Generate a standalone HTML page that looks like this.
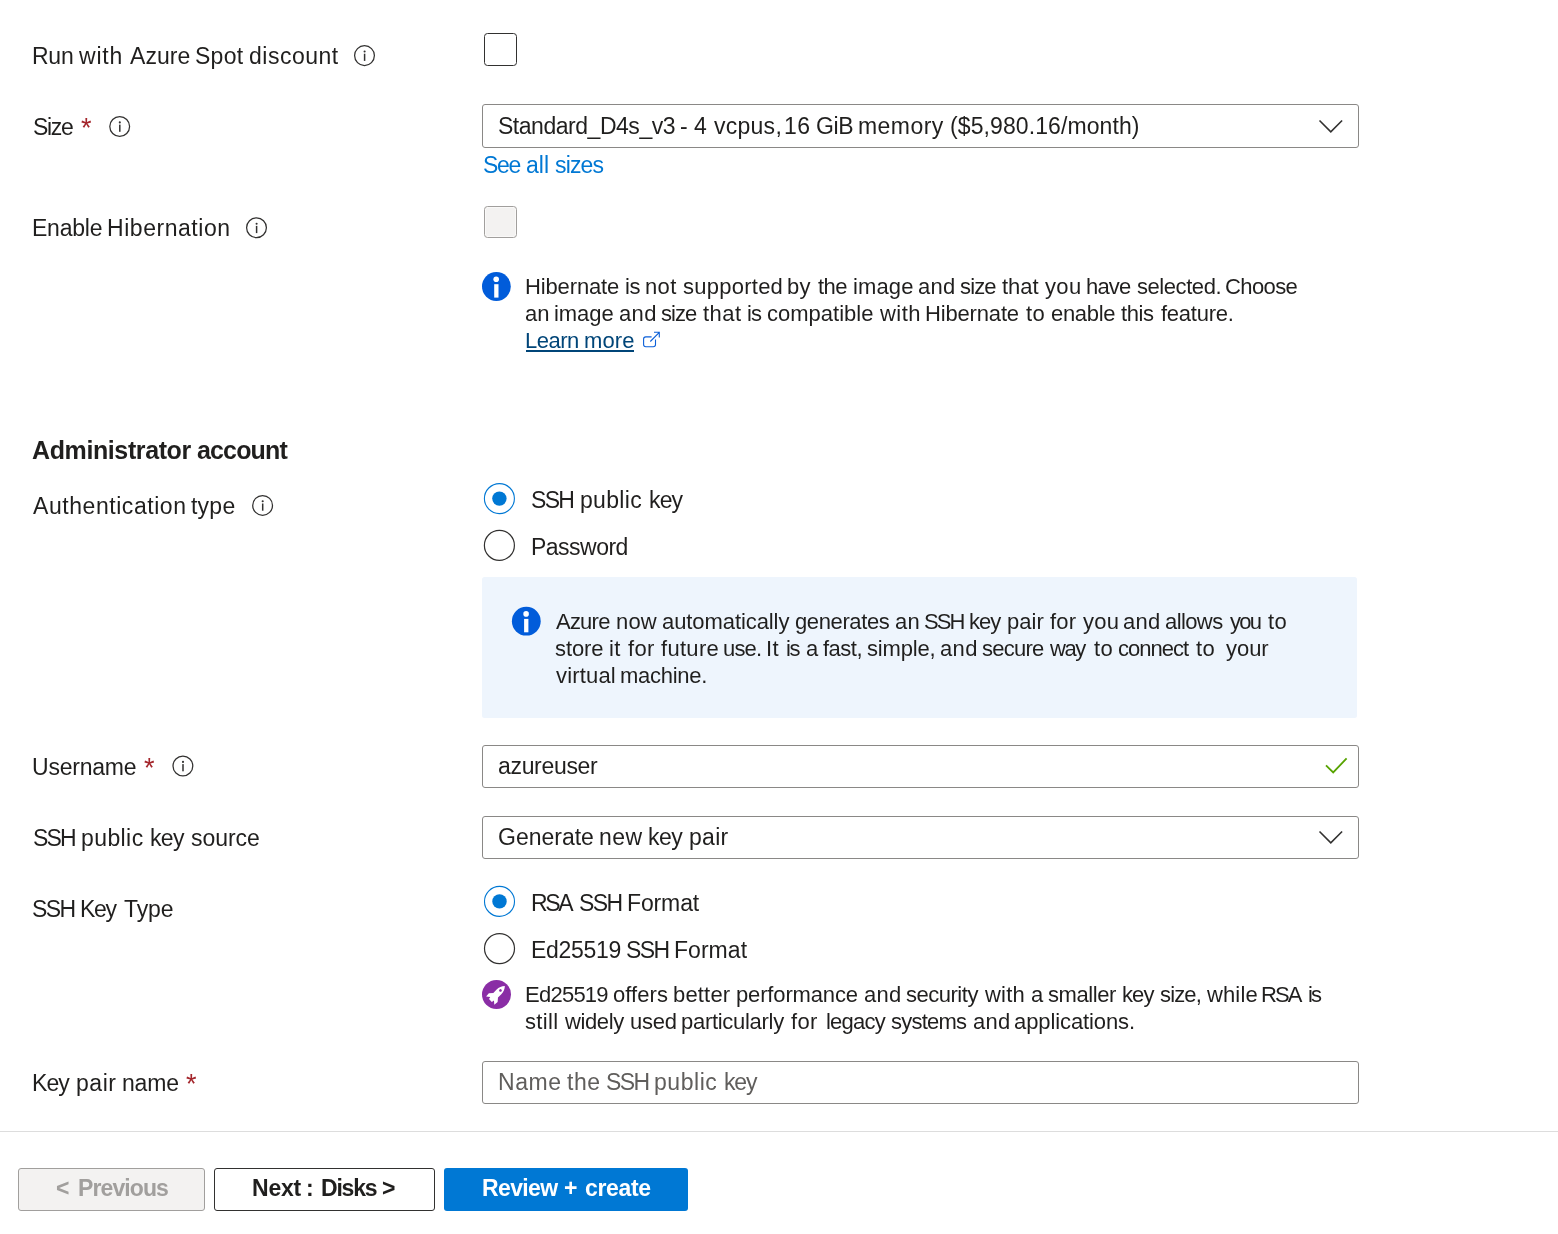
<!DOCTYPE html>
<html><head><meta charset="utf-8"><title>Azure VM</title><style>
html,body{margin:0;padding:0;background:#fff;width:1558px;height:1234px;overflow:hidden;position:relative}
.t{position:absolute;font-family:"Liberation Sans",sans-serif;line-height:30px;white-space:pre;will-change:transform}
.ab{position:absolute;display:block}
.box{position:absolute;box-sizing:border-box}
</style></head>
<body>
<div class='box' style='left:484px;top:33px;width:33px;height:33px;border:1.3px solid #323130;border-radius:3.5px;background:#fff'></div>
<div class='box' style='left:482px;top:104px;width:877px;height:44px;border:1.2px solid #8a8886;border-radius:3px;background:#fff'></div>
<div class='box' style='left:484px;top:206px;width:33px;height:32px;border:1px solid #a19f9d;border-radius:3.5px;background:#f3f2f1;box-shadow:inset 0 0 0 1px #faf9f8'></div>
<div class='box' style='left:482px;top:577px;width:875px;height:141px;border-radius:2.5px;background:#eef5fd'></div>
<div class='box' style='left:482px;top:745px;width:877px;height:43px;border:1.2px solid #8a8886;border-radius:3px;background:#fff'></div>
<div class='box' style='left:482px;top:816px;width:877px;height:43px;border:1.2px solid #8a8886;border-radius:3px;background:#fff'></div>
<div class='box' style='left:482px;top:1061px;width:877px;height:43px;border:1.2px solid #8a8886;border-radius:3px;background:#fff'></div>
<div class='box' style='left:0;top:1131px;width:1558px;height:1px;background:#dddddd'></div>
<div class='box' style='left:18px;top:1168px;width:187px;height:43px;border:1px solid #a19f9d;border-radius:3px;background:#f3f2f1'></div>
<div class='box' style='left:214px;top:1168px;width:221px;height:43px;border:1px solid #323130;border-radius:3px;background:#fff'></div>
<div class='box' style='left:444px;top:1168px;width:244px;height:43px;border-radius:3px;background:#0078d4'></div>
<div class='box' style='left:526px;top:350px;width:108px;height:2px;background:#004578'></div>
<svg class='ab' style='left:353px;top:44px' width='23' height='23' viewBox='0 0 23 23'><g transform='translate(11.50,11.60)'><circle cx='0' cy='0' r='9.9' fill='none' stroke='#323130' stroke-width='1.25'/><circle cx='0.1' cy='-4.1' r='1.05' fill='#323130'/><rect x='-0.65' y='-1.9' width='1.5' height='7.2' fill='#323130'/></g></svg>
<svg class='ab' style='left:108px;top:115px' width='23' height='23' viewBox='0 0 23 23'><g transform='translate(11.70,11.50)'><circle cx='0' cy='0' r='9.9' fill='none' stroke='#323130' stroke-width='1.25'/><circle cx='0.1' cy='-4.1' r='1.05' fill='#323130'/><rect x='-0.65' y='-1.9' width='1.5' height='7.2' fill='#323130'/></g></svg>
<svg class='ab' style='left:245px;top:216px' width='23' height='23' viewBox='0 0 23 23'><g transform='translate(11.50,11.80)'><circle cx='0' cy='0' r='9.9' fill='none' stroke='#323130' stroke-width='1.25'/><circle cx='0.1' cy='-4.1' r='1.05' fill='#323130'/><rect x='-0.65' y='-1.9' width='1.5' height='7.2' fill='#323130'/></g></svg>
<svg class='ab' style='left:251px;top:493px' width='23' height='23' viewBox='0 0 23 23'><g transform='translate(11.60,12.40)'><circle cx='0' cy='0' r='9.9' fill='none' stroke='#323130' stroke-width='1.25'/><circle cx='0.1' cy='-4.1' r='1.05' fill='#323130'/><rect x='-0.65' y='-1.9' width='1.5' height='7.2' fill='#323130'/></g></svg>
<svg class='ab' style='left:171px;top:754px' width='23' height='23' viewBox='0 0 23 23'><g transform='translate(11.90,12.00)'><circle cx='0' cy='0' r='9.9' fill='none' stroke='#323130' stroke-width='1.25'/><circle cx='0.1' cy='-4.1' r='1.05' fill='#323130'/><rect x='-0.65' y='-1.9' width='1.5' height='7.2' fill='#323130'/></g></svg>
<svg class='ab' style='left:1318px;top:119px' width='27' height='16' viewBox='0 0 27 16'><polyline points='1.5,1.5 12.8,12.8 24.1,1.5' fill='none' stroke='#323130' stroke-width='1.6'/></svg>
<svg class='ab' style='left:1318px;top:830px' width='27' height='16' viewBox='0 0 27 16'><polyline points='1.5,1.5 12.8,12.8 24.1,1.5' fill='none' stroke='#323130' stroke-width='1.6'/></svg>
<svg class='ab' style='left:481px;top:271px' width='31' height='31' viewBox='0 0 31 31'><g transform='translate(15.40,15.50)'><circle cx='0' cy='0' r='14.4' fill='#015cda'/><circle cx='-0.2' cy='-7.3' r='2.8' fill='#fff'/><rect x='-2.2' y='-2.3' width='4.3' height='13.4' fill='#fff'/></g></svg>
<svg class='ab' style='left:642px;top:331px' width='20' height='20' viewBox='0 0 20 20'><path d='M9.6,5.9 H3.8 Q1.6,5.9 1.6,8.1 V13.6 Q1.6,15.8 3.8,15.8 H11.3 Q13.5,15.8 13.5,13.6 V8.6' fill='none' stroke='#0b5fd8' stroke-width='1.1'/><path d='M8.3,10.5 L17.3,1.3 M12,1.3 H17.3 V6.6' fill='none' stroke='#0b5fd8' stroke-width='1.1'/></svg>
<svg class='ab' style='left:482px;top:481px' width='35' height='35' viewBox='0 0 35 35'><g transform='translate(17.40,17.60)'><circle cx='0' cy='0' r='15' fill='#fff' stroke='#0078d4' stroke-width='1.1'/><circle cx='0' cy='0' r='7.2' fill='#0078d4'/></g></svg>
<svg class='ab' style='left:482px;top:528px' width='35' height='35' viewBox='0 0 35 35'><g transform='translate(17.40,17.40)'><circle cx='0' cy='0' r='15' fill='#fff' stroke='#323130' stroke-width='1.2'/></g></svg>
<svg class='ab' style='left:511px;top:606px' width='31' height='31' viewBox='0 0 31 31'><g transform='translate(15.30,15.20)'><circle cx='0' cy='0' r='14.4' fill='#015cda'/><circle cx='-0.2' cy='-7.3' r='2.8' fill='#fff'/><rect x='-2.2' y='-2.3' width='4.3' height='13.4' fill='#fff'/></g></svg>
<svg class='ab' style='left:1325px;top:757px' width='26' height='20' viewBox='0 0 26 20'><polyline points='1,8.3 8.2,15.4 21.6,1.4' fill='none' stroke='#57a300' stroke-width='1.8'/></svg>
<svg class='ab' style='left:482px;top:884px' width='35' height='35' viewBox='0 0 35 35'><g transform='translate(17.50,17.40)'><circle cx='0' cy='0' r='15' fill='#fff' stroke='#0078d4' stroke-width='1.1'/><circle cx='0' cy='0' r='7.2' fill='#0078d4'/></g></svg>
<svg class='ab' style='left:482px;top:931px' width='35' height='35' viewBox='0 0 35 35'><g transform='translate(17.50,17.60)'><circle cx='0' cy='0' r='15' fill='#fff' stroke='#323130' stroke-width='1.2'/></g></svg>
<svg class='ab' style='left:481px;top:979px' width='31' height='31' viewBox='0 0 31 31'><circle cx='15.50' cy='15.40' r='14.5' fill='#8a2da5'/><g transform='translate(15.50,15.40) rotate(45)'><path d='M0,-11.8 C2.2,-9.6 3.3,-6.5 3.3,-3.5 L3.3,1.2 L6.2,4.6 L5.8,8.9 L2.6,6.2 L2.0,8.6 L-2.0,8.6 L-2.6,6.2 L-5.8,8.9 L-6.2,4.6 L-3.3,1.2 L-3.3,-3.5 C-3.3,-6.5 -2.2,-9.6 0,-11.8 Z' fill='#fff'/><circle cx='0' cy='-5.6' r='1.35' fill='#8a2da5'/></g></svg>
<div class='t' style='left:31.8px;top:40.6px;font-size:23px;font-weight:400;color:#201f1e;letter-spacing:-0.250px'>Run</div>
<div class='t' style='left:79.3px;top:40.6px;font-size:23px;font-weight:400;color:#201f1e;letter-spacing:0.789px'>with</div>
<div class='t' style='left:129.7px;top:40.6px;font-size:23px;font-weight:400;color:#201f1e;letter-spacing:0.075px'>Azure</div>
<div class='t' style='left:195.0px;top:40.6px;font-size:23px;font-weight:400;color:#201f1e;letter-spacing:0.267px'>Spot</div>
<div class='t' style='left:248.8px;top:40.6px;font-size:23px;font-weight:400;color:#201f1e;letter-spacing:0.514px'>discount</div>
<div class='t' style='left:32.5px;top:112.0px;font-size:23px;font-weight:400;color:#201f1e;letter-spacing:-1.333px'>Size</div>
<div class='t' style='left:32.2px;top:213.0px;font-size:23px;font-weight:400;color:#201f1e;letter-spacing:-0.220px'>Enable</div>
<div class='t' style='left:107.1px;top:213.0px;font-size:23px;font-weight:400;color:#201f1e;letter-spacing:0.540px'>Hibernation</div>
<div class='t' style='left:31.6px;top:434.8px;font-size:25px;font-weight:700;color:#201f1e;letter-spacing:-0.392px'>Administrator</div>
<div class='t' style='left:196.9px;top:434.8px;font-size:25px;font-weight:700;color:#201f1e;letter-spacing:-0.850px'>account</div>
<div class='t' style='left:33.1px;top:490.5px;font-size:23px;font-weight:400;color:#201f1e;letter-spacing:0.554px'>Authentication</div>
<div class='t' style='left:191.3px;top:490.5px;font-size:23px;font-weight:400;color:#201f1e;letter-spacing:0.233px'>type</div>
<div class='t' style='left:31.5px;top:752.0px;font-size:23px;font-weight:400;color:#201f1e;letter-spacing:-0.214px'>Username</div>
<div class='t' style='left:32.9px;top:823.0px;font-size:23px;font-weight:400;color:#201f1e;letter-spacing:-1.790px'>SSH</div>
<div class='t' style='left:80.9px;top:823.0px;font-size:23px;font-weight:400;color:#201f1e;letter-spacing:0.410px'>public</div>
<div class='t' style='left:150.3px;top:823.0px;font-size:23px;font-weight:400;color:#201f1e;letter-spacing:-0.650px'>key</div>
<div class='t' style='left:191.0px;top:823.0px;font-size:23px;font-weight:400;color:#201f1e;letter-spacing:-0.060px'>source</div>
<div class='t' style='left:32.1px;top:894.0px;font-size:23px;font-weight:400;color:#201f1e;letter-spacing:-1.650px'>SSH</div>
<div class='t' style='left:79.8px;top:894.0px;font-size:23px;font-weight:400;color:#201f1e;letter-spacing:-1.350px'>Key</div>
<div class='t' style='left:124.1px;top:894.0px;font-size:23px;font-weight:400;color:#201f1e;letter-spacing:-0.100px'>Type</div>
<div class='t' style='left:32.2px;top:1068.0px;font-size:23px;font-weight:400;color:#201f1e;letter-spacing:-0.950px'>Key</div>
<div class='t' style='left:76.3px;top:1068.0px;font-size:23px;font-weight:400;color:#201f1e;letter-spacing:0.558px'>pair</div>
<div class='t' style='left:122.1px;top:1068.0px;font-size:23px;font-weight:400;color:#201f1e;letter-spacing:-0.200px'>name</div>
<div class='t' style='left:497.7px;top:111.0px;font-size:23px;font-weight:400;color:#201f1e;letter-spacing:-0.471px'>Standard_D4s_v3</div>
<div class='t' style='left:680.1px;top:111.0px;font-size:23px;font-weight:400;color:#201f1e;letter-spacing:-0.144px'>-</div>
<div class='t' style='left:694.4px;top:111.0px;font-size:23px;font-weight:400;color:#201f1e;letter-spacing:-0.144px'>4</div>
<div class='t' style='left:713.9px;top:111.0px;font-size:23px;font-weight:400;color:#201f1e;letter-spacing:0.260px'>vcpus,</div>
<div class='t' style='left:784.2px;top:111.0px;font-size:23px;font-weight:400;color:#201f1e;letter-spacing:0.456px'>16</div>
<div class='t' style='left:816.0px;top:111.0px;font-size:23px;font-weight:400;color:#201f1e;letter-spacing:-0.350px'>GiB</div>
<div class='t' style='left:858.3px;top:111.0px;font-size:23px;font-weight:400;color:#201f1e;letter-spacing:0.456px'>memory</div>
<div class='t' style='left:950.0px;top:111.0px;font-size:23px;font-weight:400;color:#201f1e;letter-spacing:0.094px'>($5,980.16/month)</div>
<div class='t' style='left:482.5px;top:149.8px;font-size:23px;font-weight:400;color:#0078d4;letter-spacing:-1.350px'>See</div>
<div class='t' style='left:525.8px;top:149.8px;font-size:23px;font-weight:400;color:#0078d4;letter-spacing:-0.000px'>all</div>
<div class='t' style='left:554.7px;top:149.8px;font-size:23px;font-weight:400;color:#0078d4;letter-spacing:-0.850px'>sizes</div>
<div class='t' style='left:524.9px;top:272.0px;font-size:22px;font-weight:400;color:#201f1e;letter-spacing:-0.138px'>Hibernate</div>
<div class='t' style='left:624.8px;top:272.0px;font-size:22px;font-weight:400;color:#201f1e;letter-spacing:-0.500px'>is</div>
<div class='t' style='left:645.3px;top:272.0px;font-size:22px;font-weight:400;color:#201f1e;letter-spacing:0.345px'>not</div>
<div class='t' style='left:683.3px;top:272.0px;font-size:22px;font-weight:400;color:#201f1e;letter-spacing:0.250px'>supported</div>
<div class='t' style='left:787.3px;top:272.0px;font-size:22px;font-weight:400;color:#201f1e;letter-spacing:0.345px'>by</div>
<div class='t' style='left:817.8px;top:272.0px;font-size:22px;font-weight:400;color:#201f1e;letter-spacing:-0.500px'>the</div>
<div class='t' style='left:852.8px;top:272.0px;font-size:22px;font-weight:400;color:#201f1e;letter-spacing:0.125px'>image</div>
<div class='t' style='left:918.3px;top:272.0px;font-size:22px;font-weight:400;color:#201f1e;letter-spacing:0.250px'>and</div>
<div class='t' style='left:959.8px;top:272.0px;font-size:22px;font-weight:400;color:#201f1e;letter-spacing:-0.867px'>size</div>
<div class='t' style='left:1002.2px;top:272.0px;font-size:22px;font-weight:400;color:#201f1e;letter-spacing:-0.067px'>that</div>
<div class='t' style='left:1045.0px;top:272.0px;font-size:22px;font-weight:400;color:#201f1e;letter-spacing:0.345px'>you</div>
<div class='t' style='left:1085.9px;top:272.0px;font-size:22px;font-weight:400;color:#201f1e;letter-spacing:-0.800px'>have</div>
<div class='t' style='left:1136.5px;top:272.0px;font-size:22px;font-weight:400;color:#201f1e;letter-spacing:-0.437px'>selected.</div>
<div class='t' style='left:1225.0px;top:272.0px;font-size:22px;font-weight:400;color:#201f1e;letter-spacing:-0.600px'>Choose</div>
<div class='t' style='left:525.2px;top:299.0px;font-size:22px;font-weight:400;color:#201f1e;letter-spacing:0.100px'>an</div>
<div class='t' style='left:554.3px;top:299.0px;font-size:22px;font-weight:400;color:#201f1e;letter-spacing:-0.075px'>image</div>
<div class='t' style='left:619.0px;top:299.0px;font-size:22px;font-weight:400;color:#201f1e;letter-spacing:0.350px'>and</div>
<div class='t' style='left:660.7px;top:299.0px;font-size:22px;font-weight:400;color:#201f1e;letter-spacing:-0.967px'>size</div>
<div class='t' style='left:702.8px;top:299.0px;font-size:22px;font-weight:400;color:#201f1e;letter-spacing:0.447px'>that</div>
<div class='t' style='left:746.6px;top:299.0px;font-size:22px;font-weight:400;color:#201f1e;letter-spacing:-1.000px'>is</div>
<div class='t' style='left:766.6px;top:299.0px;font-size:22px;font-weight:400;color:#201f1e;letter-spacing:0.011px'>compatible</div>
<div class='t' style='left:879.7px;top:299.0px;font-size:22px;font-weight:400;color:#201f1e;letter-spacing:0.447px'>with</div>
<div class='t' style='left:925.0px;top:299.0px;font-size:22px;font-weight:400;color:#201f1e;letter-spacing:-0.162px'>Hibernate</div>
<div class='t' style='left:1025.7px;top:299.0px;font-size:22px;font-weight:400;color:#201f1e;letter-spacing:0.447px'>to</div>
<div class='t' style='left:1050.5px;top:299.0px;font-size:22px;font-weight:400;color:#201f1e;letter-spacing:-0.320px'>enable</div>
<div class='t' style='left:1120.9px;top:299.0px;font-size:22px;font-weight:400;color:#201f1e;letter-spacing:-0.400px'>this</div>
<div class='t' style='left:1160.7px;top:299.0px;font-size:22px;font-weight:400;color:#201f1e;letter-spacing:-0.243px'>feature.</div>
<div class='t' style='left:524.9px;top:326.0px;font-size:22px;font-weight:400;color:#004578;letter-spacing:-0.500px'>Learn</div>
<div class='t' style='left:583.9px;top:326.0px;font-size:22px;font-weight:400;color:#004578;letter-spacing:0.100px'>more</div>
<div class='t' style='left:530.9px;top:484.9px;font-size:23px;font-weight:400;color:#201f1e;letter-spacing:-1.700px'>SSH</div>
<div class='t' style='left:579.5px;top:484.9px;font-size:23px;font-weight:400;color:#201f1e;letter-spacing:0.315px'>public</div>
<div class='t' style='left:648.8px;top:484.9px;font-size:23px;font-weight:400;color:#201f1e;letter-spacing:-0.850px'>key</div>
<div class='t' style='left:530.6px;top:532.2px;font-size:23px;font-weight:400;color:#201f1e;letter-spacing:-0.514px'>Password</div>
<div class='t' style='left:555.8px;top:607.2px;font-size:22px;font-weight:400;color:#201f1e;letter-spacing:-0.775px'>Azure</div>
<div class='t' style='left:615.7px;top:607.2px;font-size:22px;font-weight:400;color:#201f1e;letter-spacing:0.150px'>now</div>
<div class='t' style='left:662.0px;top:607.2px;font-size:22px;font-weight:400;color:#201f1e;letter-spacing:-0.083px'>automatically</div>
<div class='t' style='left:795.0px;top:607.2px;font-size:22px;font-weight:400;color:#201f1e;letter-spacing:-0.388px'>generates</div>
<div class='t' style='left:894.9px;top:607.2px;font-size:22px;font-weight:400;color:#201f1e;letter-spacing:0.301px'>an</div>
<div class='t' style='left:924.3px;top:607.2px;font-size:22px;font-weight:400;color:#201f1e;letter-spacing:-1.899px'>SSH</div>
<div class='t' style='left:968.9px;top:607.2px;font-size:22px;font-weight:400;color:#201f1e;letter-spacing:-0.950px'>key</div>
<div class='t' style='left:1007.0px;top:607.2px;font-size:22px;font-weight:400;color:#201f1e;letter-spacing:0.067px'>pair</div>
<div class='t' style='left:1050.2px;top:607.2px;font-size:22px;font-weight:400;color:#201f1e;letter-spacing:0.150px'>for</div>
<div class='t' style='left:1082.5px;top:607.2px;font-size:22px;font-weight:400;color:#201f1e;letter-spacing:0.300px'>you</div>
<div class='t' style='left:1123.1px;top:607.2px;font-size:22px;font-weight:400;color:#201f1e;letter-spacing:0.301px'>and</div>
<div class='t' style='left:1165.0px;top:607.2px;font-size:22px;font-weight:400;color:#201f1e;letter-spacing:-0.600px'>allows</div>
<div class='t' style='left:1230.0px;top:607.2px;font-size:22px;font-weight:400;color:#201f1e;letter-spacing:-1.700px'>you</div>
<div class='t' style='left:1267.6px;top:607.2px;font-size:22px;font-weight:400;color:#201f1e;letter-spacing:0.301px'>to</div>
<div class='t' style='left:554.9px;top:634.1px;font-size:22px;font-weight:400;color:#201f1e;letter-spacing:-0.075px'>store</div>
<div class='t' style='left:608.6px;top:634.1px;font-size:22px;font-weight:400;color:#201f1e;letter-spacing:0.376px'>it</div>
<div class='t' style='left:628.1px;top:634.1px;font-size:22px;font-weight:400;color:#201f1e;letter-spacing:0.376px'>for</div>
<div class='t' style='left:660.9px;top:634.1px;font-size:22px;font-weight:400;color:#201f1e;letter-spacing:0.300px'>future</div>
<div class='t' style='left:723.4px;top:634.1px;font-size:22px;font-weight:400;color:#201f1e;letter-spacing:-0.833px'>use.</div>
<div class='t' style='left:765.9px;top:634.1px;font-size:22px;font-weight:400;color:#201f1e;letter-spacing:0.376px'>It</div>
<div class='t' style='left:786.3px;top:634.1px;font-size:22px;font-weight:400;color:#201f1e;letter-spacing:-1.500px'>is</div>
<div class='t' style='left:805.8px;top:634.1px;font-size:22px;font-weight:400;color:#201f1e;letter-spacing:-0.224px'>a</div>
<div class='t' style='left:823.4px;top:634.1px;font-size:22px;font-weight:400;color:#201f1e;letter-spacing:-0.500px'>fast,</div>
<div class='t' style='left:867.4px;top:634.1px;font-size:22px;font-weight:400;color:#201f1e;letter-spacing:-0.183px'>simple,</div>
<div class='t' style='left:940.3px;top:634.1px;font-size:22px;font-weight:400;color:#201f1e;letter-spacing:0.376px'>and</div>
<div class='t' style='left:982.2px;top:634.1px;font-size:22px;font-weight:400;color:#201f1e;letter-spacing:-0.760px'>secure</div>
<div class='t' style='left:1050.4px;top:634.1px;font-size:22px;font-weight:400;color:#201f1e;letter-spacing:-1.450px'>way</div>
<div class='t' style='left:1093.5px;top:634.1px;font-size:22px;font-weight:400;color:#201f1e;letter-spacing:0.376px'>to</div>
<div class='t' style='left:1118.2px;top:634.1px;font-size:22px;font-weight:400;color:#201f1e;letter-spacing:-1.000px'>connect</div>
<div class='t' style='left:1196.2px;top:634.1px;font-size:22px;font-weight:400;color:#201f1e;letter-spacing:0.376px'>to</div>
<div class='t' style='left:1225.6px;top:634.1px;font-size:22px;font-weight:400;color:#201f1e;letter-spacing:-0.033px'>your</div>
<div class='t' style='left:555.6px;top:661.0px;font-size:22px;font-weight:400;color:#201f1e;letter-spacing:0.167px'>virtual</div>
<div class='t' style='left:619.6px;top:661.0px;font-size:22px;font-weight:400;color:#201f1e;letter-spacing:-0.286px'>machine.</div>
<div class='t' style='left:497.5px;top:751.3px;font-size:23px;font-weight:400;color:#201f1e;letter-spacing:-0.325px'>azureuser</div>
<div class='t' style='left:497.8px;top:822.0px;font-size:23px;font-weight:400;color:#201f1e;letter-spacing:-0.000px'>Generate</div>
<div class='t' style='left:598.8px;top:822.0px;font-size:23px;font-weight:400;color:#201f1e;letter-spacing:0.450px'>new</div>
<div class='t' style='left:647.7px;top:822.0px;font-size:23px;font-weight:400;color:#201f1e;letter-spacing:-0.500px'>key</div>
<div class='t' style='left:688.7px;top:822.0px;font-size:23px;font-weight:400;color:#201f1e;letter-spacing:0.300px'>pair</div>
<div class='t' style='left:530.7px;top:888.0px;font-size:23px;font-weight:400;color:#201f1e;letter-spacing:-2.331px'>RSA</div>
<div class='t' style='left:578.7px;top:888.0px;font-size:23px;font-weight:400;color:#201f1e;letter-spacing:-1.600px'>SSH</div>
<div class='t' style='left:626.5px;top:888.0px;font-size:23px;font-weight:400;color:#201f1e;letter-spacing:-0.131px'>Format</div>
<div class='t' style='left:530.7px;top:934.8px;font-size:23px;font-weight:400;color:#201f1e;letter-spacing:-0.283px'>Ed25519</div>
<div class='t' style='left:626.0px;top:934.8px;font-size:23px;font-weight:400;color:#201f1e;letter-spacing:-1.650px'>SSH</div>
<div class='t' style='left:673.7px;top:934.8px;font-size:23px;font-weight:400;color:#201f1e;letter-spacing:0.040px'>Format</div>
<div class='t' style='left:524.6px;top:979.5px;font-size:22px;font-weight:400;color:#201f1e;letter-spacing:-0.750px'>Ed25519</div>
<div class='t' style='left:613.1px;top:979.5px;font-size:22px;font-weight:400;color:#201f1e;letter-spacing:0.060px'>offers</div>
<div class='t' style='left:673.4px;top:979.5px;font-size:22px;font-weight:400;color:#201f1e;letter-spacing:0.180px'>better</div>
<div class='t' style='left:736.3px;top:979.5px;font-size:22px;font-weight:400;color:#201f1e;letter-spacing:-0.150px'>performance</div>
<div class='t' style='left:863.8px;top:979.5px;font-size:22px;font-weight:400;color:#201f1e;letter-spacing:0.233px'>and</div>
<div class='t' style='left:905.7px;top:979.5px;font-size:22px;font-weight:400;color:#201f1e;letter-spacing:-0.486px'>security</div>
<div class='t' style='left:985.3px;top:979.5px;font-size:22px;font-weight:400;color:#201f1e;letter-spacing:0.233px'>with</div>
<div class='t' style='left:1030.7px;top:979.5px;font-size:22px;font-weight:400;color:#201f1e;letter-spacing:-0.367px'>a</div>
<div class='t' style='left:1047.6px;top:979.5px;font-size:22px;font-weight:400;color:#201f1e;letter-spacing:-0.417px'>smaller</div>
<div class='t' style='left:1122.1px;top:979.5px;font-size:22px;font-weight:400;color:#201f1e;letter-spacing:-0.900px'>key</div>
<div class='t' style='left:1160.3px;top:979.5px;font-size:22px;font-weight:400;color:#201f1e;letter-spacing:-0.850px'>size,</div>
<div class='t' style='left:1206.9px;top:979.5px;font-size:22px;font-weight:400;color:#201f1e;letter-spacing:0.125px'>while</div>
<div class='t' style='left:1261.4px;top:979.5px;font-size:22px;font-weight:400;color:#201f1e;letter-spacing:-1.967px'>RSA</div>
<div class='t' style='left:1307.6px;top:979.5px;font-size:22px;font-weight:400;color:#201f1e;letter-spacing:-1.967px'>is</div>
<div class='t' style='left:525.2px;top:1007.0px;font-size:22px;font-weight:400;color:#201f1e;letter-spacing:0.367px'>still</div>
<div class='t' style='left:564.8px;top:1007.0px;font-size:22px;font-weight:400;color:#201f1e;letter-spacing:-0.380px'>widely</div>
<div class='t' style='left:629.9px;top:1007.0px;font-size:22px;font-weight:400;color:#201f1e;letter-spacing:-0.200px'>used</div>
<div class='t' style='left:681.3px;top:1007.0px;font-size:22px;font-weight:400;color:#201f1e;letter-spacing:-0.291px'>particularly</div>
<div class='t' style='left:791.1px;top:1007.0px;font-size:22px;font-weight:400;color:#201f1e;letter-spacing:0.367px'>for</div>
<div class='t' style='left:826.2px;top:1007.0px;font-size:22px;font-weight:400;color:#201f1e;letter-spacing:-0.780px'>legacy</div>
<div class='t' style='left:891.3px;top:1007.0px;font-size:22px;font-weight:400;color:#201f1e;letter-spacing:-0.783px'>systems</div>
<div class='t' style='left:972.6px;top:1007.0px;font-size:22px;font-weight:400;color:#201f1e;letter-spacing:0.250px'>and</div>
<div class='t' style='left:1014.1px;top:1007.0px;font-size:22px;font-weight:400;color:#201f1e;letter-spacing:-0.100px'>applications.</div>
<div class='t' style='left:497.5px;top:1067.2px;font-size:23px;font-weight:400;color:#605e5c;letter-spacing:0.555px'>Name</div>
<div class='t' style='left:566.6px;top:1067.2px;font-size:23px;font-weight:400;color:#605e5c;letter-spacing:0.555px'>the</div>
<div class='t' style='left:606.0px;top:1067.2px;font-size:23px;font-weight:400;color:#605e5c;letter-spacing:-1.645px'>SSH</div>
<div class='t' style='left:654.2px;top:1067.2px;font-size:23px;font-weight:400;color:#605e5c;letter-spacing:0.555px'>public</div>
<div class='t' style='left:724.3px;top:1067.2px;font-size:23px;font-weight:400;color:#605e5c;letter-spacing:-1.150px'>key</div>
<div class='t' style='left:56.4px;top:1173.3px;font-size:23px;font-weight:700;color:#a19f9d;letter-spacing:-0.578px'>&lt;</div>
<div class='t' style='left:77.9px;top:1173.3px;font-size:23px;font-weight:700;color:#a19f9d;letter-spacing:-0.900px'>Previous</div>
<div class='t' style='left:251.9px;top:1173.0px;font-size:23px;font-weight:700;color:#201f1e;letter-spacing:-0.200px'>Next</div>
<div class='t' style='left:306.3px;top:1173.0px;font-size:23px;font-weight:700;color:#201f1e;letter-spacing:-0.500px'>:</div>
<div class='t' style='left:320.5px;top:1173.0px;font-size:23px;font-weight:700;color:#201f1e;letter-spacing:-1.200px'>Disks</div>
<div class='t' style='left:381.7px;top:1173.0px;font-size:23px;font-weight:700;color:#201f1e;letter-spacing:-0.500px'>&gt;</div>
<div class='t' style='left:482.0px;top:1173.0px;font-size:23px;font-weight:700;color:#ffffff;letter-spacing:-0.620px'>Review</div>
<div class='t' style='left:563.9px;top:1173.0px;font-size:23px;font-weight:700;color:#ffffff;letter-spacing:-0.293px'>+</div>
<div class='t' style='left:585.1px;top:1173.0px;font-size:23px;font-weight:700;color:#ffffff;letter-spacing:-0.360px'>create</div>
<div class='t' style='left:80.6px;top:112.5px;font-size:27px;color:#a4262c'>*</div>
<div class='t' style='left:143.5px;top:753.0px;font-size:27px;color:#a4262c'>*</div>
<div class='t' style='left:186.3px;top:1068.5px;font-size:27px;color:#a4262c'>*</div>
</body></html>
